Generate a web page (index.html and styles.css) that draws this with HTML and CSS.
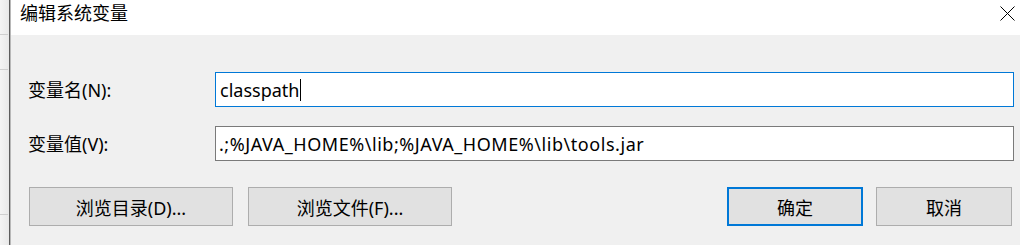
FILE: index.html
```html
<!DOCTYPE html>
<html lang="zh-CN">
<head>
    <meta charset="UTF-8">
    <title>编辑系统变量</title>
    <link rel="stylesheet" href="styles.css">
</head>
<body>
    <div class="screen">
        <div class="behind">
            <div class="behind-row r1"></div>
            <div class="behind-row r2"></div>
            <div class="behind-row r3"></div>
        </div>
        <div class="dialog">
            <div class="title-bar">
                <span class="title">编辑系统变量</span>
                <svg class="close" width="15" height="15" viewBox="0 0 15 15">
                    <line x1="0.5" y1="0.5" x2="14.5" y2="14.5" stroke="#000" stroke-width="1"></line>
                    <line x1="14.5" y1="0.5" x2="0.5" y2="14.5" stroke="#000" stroke-width="1"></line>
                </svg>
            </div>
            <div class="content">
                <div class="form">
                    <label class="label">变量名(N):</label>
                    <div class="field focused">classpath<span class="caret"></span></div>
                    <label class="label">变量值(V):</label>
                    <div class="field spaced">.;%JAVA_HOME%\lib;%JAVA_HOME%\lib\tools.jar</div>
                </div>
                <div class="buttons">
                    <div class="group">
                        <button class="btn wide">浏览目录(D)...</button>
                        <button class="btn wide">浏览文件(F)...</button>
                    </div>
                    <div class="group tight">
                        <button class="btn default">确定</button>
                        <button class="btn">取消</button>
                    </div>
                </div>
            </div>
        </div>
    </div>
</body>
</html>
```

FILE: styles.css
```css
* {
    margin: 0;
    padding: 0;
    box-sizing: border-box;
}

body {
    font-family: "Noto Sans", "Noto Sans CJK SC", sans-serif;
    font-size: 18px;
    color: #000;
    background: #f0f0f0;
    width: 1020px;
    height: 245px;
    overflow: hidden;
}

.screen {
    display: flex;
    height: 245px;
}

/* window behind the dialog */
.behind {
    width: 10px;
    background: linear-gradient(90deg, #f4f4f4, #e8e8e8);
    border-right: 1px solid #5c5c5c;
    box-shadow: 1px 0 0 #b8b8b8;
    display: flex;
    flex-direction: column;
}

.behind-row {
    border-bottom: 1px solid #cfcfcf;
    margin-right: 1px;
}

.r1 { height: 35px; }
.r2 { height: 35px; }
.r3 { height: 145px; }

.dialog {
    flex: 1;
    display: flex;
    flex-direction: column;
    margin-left: 1px;
}

.title-bar {
    height: 35px;
    background: #fff;
    display: flex;
    align-items: flex-start;
    justify-content: space-between;
    padding-left: 9px;
    padding-right: 5px;
}

.title {
    line-height: 27px;
}

.close {
    margin-top: 6px;
}

.content {
    flex: 1;
    background: #f0f0f0;
    padding: 37px 6px 0 17px;
}

.form {
    display: grid;
    grid-template-columns: 187px 1fr;
    row-gap: 19px;
    align-items: center;
}

.label {
    line-height: 20px;
}

.field {
    height: 35px;
    background: #fff;
    border: 1px solid #7a7a7a;
    padding: 0 4px;
    display: flex;
    align-items: center;
    white-space: pre;
}

.field.focused {
    border-color: #0078d7;
}

.field.spaced {
    letter-spacing: 0.55px;
    padding-left: 3px;
}

.caret {
    display: inline-block;
    width: 1px;
    height: 22px;
    background: #000;
    margin-left: 1px;
}

.buttons {
    display: flex;
    justify-content: space-between;
    margin-top: 26px;
    padding-left: 1px;
    padding-right: 2px;
}

.group {
    display: flex;
    gap: 15px;
}

.group.tight {
    gap: 13px;
}

.btn {
    font-family: inherit;
    font-size: 18px;
    color: #000;
    height: 39px;
    width: 136px;
    background: #e1e1e1;
    border: 1px solid #adadad;
    cursor: default;
}

.btn.wide {
    width: 204px;
}

.btn.default {
    border: 2px solid #0078d7;
}
```
